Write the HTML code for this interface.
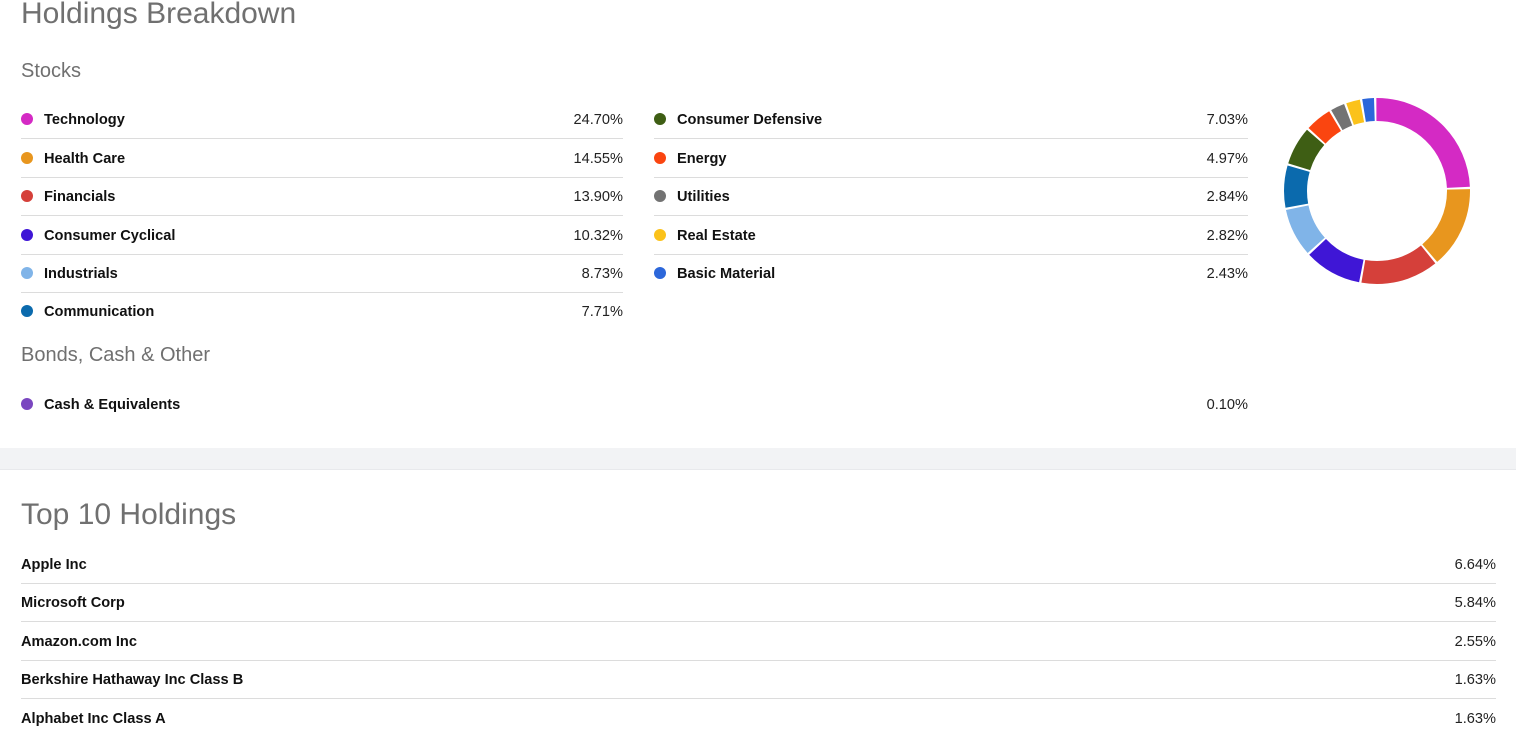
<!DOCTYPE html>
<html><head><meta charset="utf-8"><style>
body{margin:0;width:1516px;height:736px;overflow:hidden;background:#fff;font-family:"Liberation Sans",Arial,sans-serif;position:relative}
.h{position:absolute;color:#707070;font-weight:normal;white-space:nowrap}
.row{position:absolute;height:38px;line-height:40px;font-size:14.6px;color:#111}
.row.b{border-bottom:1px solid #dcdcdc}
.row .n{position:absolute;left:23px;font-weight:bold}
.row .v{position:absolute;right:0;color:#222}
.row .d{position:absolute;left:0;top:13px;width:12px;height:12px;border-radius:50%}
.t{position:absolute;left:21px;width:1475px;height:38px;line-height:40px;font-size:14.6px}
.t.b{border-bottom:1px solid #dcdcdc}
.t .n{font-weight:bold;color:#111}
.t .v{position:absolute;right:0;color:#222}
</style></head><body>
<div class="h" style="left:21px;top:-3px;font-size:30px">Holdings Breakdown</div>
<div class="h" style="left:21px;top:60px;font-size:20px">Stocks</div>

<div class="row b" style="left:21px;width:602px;top:100px"><span class="d" style="background:#d42ac4"></span><span class="n">Technology</span><span class="v">24.70%</span></div>
<div class="row b" style="left:21px;width:602px;top:139px"><span class="d" style="background:#e8961e"></span><span class="n">Health Care</span><span class="v">14.55%</span></div>
<div class="row b" style="left:21px;width:602px;top:177px"><span class="d" style="background:#d5403a"></span><span class="n">Financials</span><span class="v">13.90%</span></div>
<div class="row b" style="left:21px;width:602px;top:216px"><span class="d" style="background:#3f16d6"></span><span class="n">Consumer Cyclical</span><span class="v">10.32%</span></div>
<div class="row b" style="left:21px;width:602px;top:254px"><span class="d" style="background:#80b4e8"></span><span class="n">Industrials</span><span class="v">8.73%</span></div>
<div class="row" style="left:21px;width:602px;top:292px"><span class="d" style="background:#0b6aad"></span><span class="n">Communication</span><span class="v">7.71%</span></div>

<div class="row b" style="left:654px;width:594px;top:100px"><span class="d" style="background:#3e5e14"></span><span class="n">Consumer Defensive</span><span class="v">7.03%</span></div>
<div class="row b" style="left:654px;width:594px;top:139px"><span class="d" style="background:#fa4510"></span><span class="n">Energy</span><span class="v">4.97%</span></div>
<div class="row b" style="left:654px;width:594px;top:177px"><span class="d" style="background:#737373"></span><span class="n">Utilities</span><span class="v">2.84%</span></div>
<div class="row b" style="left:654px;width:594px;top:216px"><span class="d" style="background:#fbc21a"></span><span class="n">Real Estate</span><span class="v">2.82%</span></div>
<div class="row" style="left:654px;width:594px;top:254px"><span class="d" style="background:#2c67da"></span><span class="n">Basic Material</span><span class="v">2.43%</span></div>

<div class="h" style="left:21px;top:344px;font-size:20px">Bonds, Cash &amp; Other</div>
<div class="row" style="left:21px;width:1227px;top:385px"><span class="d" style="background:#7a46c0"></span><span class="n">Cash &amp; Equivalents</span><span class="v">0.10%</span></div>

<svg style="position:absolute;left:0;top:0" width="1516" height="440">
<g transform="rotate(-90 1377 191)" fill="none" stroke-width="23">
<circle cx="1377" cy="191" r="81.5" pathLength="100" stroke="#d42ac4" stroke-dasharray="24.3 75.7" stroke-dashoffset="0"/>
<circle cx="1377" cy="191" r="81.5" pathLength="100" stroke="#e8961e" stroke-dasharray="14.15 85.85" stroke-dashoffset="-24.7"/>
<circle cx="1377" cy="191" r="81.5" pathLength="100" stroke="#d5403a" stroke-dasharray="13.5 86.5" stroke-dashoffset="-39.25"/>
<circle cx="1377" cy="191" r="81.5" pathLength="100" stroke="#3f16d6" stroke-dasharray="9.92 90.08" stroke-dashoffset="-53.15"/>
<circle cx="1377" cy="191" r="81.5" pathLength="100" stroke="#80b4e8" stroke-dasharray="8.33 91.67" stroke-dashoffset="-63.47"/>
<circle cx="1377" cy="191" r="81.5" pathLength="100" stroke="#0b6aad" stroke-dasharray="7.31 92.69" stroke-dashoffset="-72.2"/>
<circle cx="1377" cy="191" r="81.5" pathLength="100" stroke="#3e5e14" stroke-dasharray="6.63 93.37" stroke-dashoffset="-79.91"/>
<circle cx="1377" cy="191" r="81.5" pathLength="100" stroke="#fa4510" stroke-dasharray="4.57 95.43" stroke-dashoffset="-86.94"/>
<circle cx="1377" cy="191" r="81.5" pathLength="100" stroke="#737373" stroke-dasharray="2.44 97.56" stroke-dashoffset="-91.91"/>
<circle cx="1377" cy="191" r="81.5" pathLength="100" stroke="#fbc21a" stroke-dasharray="2.42 97.58" stroke-dashoffset="-94.75"/>
<circle cx="1377" cy="191" r="81.5" pathLength="100" stroke="#2c67da" stroke-dasharray="2.03 97.97" stroke-dashoffset="-97.57"/>
</g></svg>

<div style="position:absolute;left:0;top:448px;width:1516px;height:21px;background:#f2f3f5;border-bottom:1px solid #e8e9ec"></div>

<div class="h" style="left:21px;top:498px;font-size:30px">Top 10 Holdings</div>
<div class="t b" style="top:545px"><span class="n">Apple Inc</span><span class="v">6.64%</span></div>
<div class="t b" style="top:583px"><span class="n">Microsoft Corp</span><span class="v">5.84%</span></div>
<div class="t b" style="top:622px"><span class="n">Amazon.com Inc</span><span class="v">2.55%</span></div>
<div class="t b" style="top:660px"><span class="n">Berkshire Hathaway Inc Class B</span><span class="v">1.63%</span></div>
<div class="t" style="top:699px"><span class="n">Alphabet Inc Class A</span><span class="v">1.63%</span></div>
</body></html>
